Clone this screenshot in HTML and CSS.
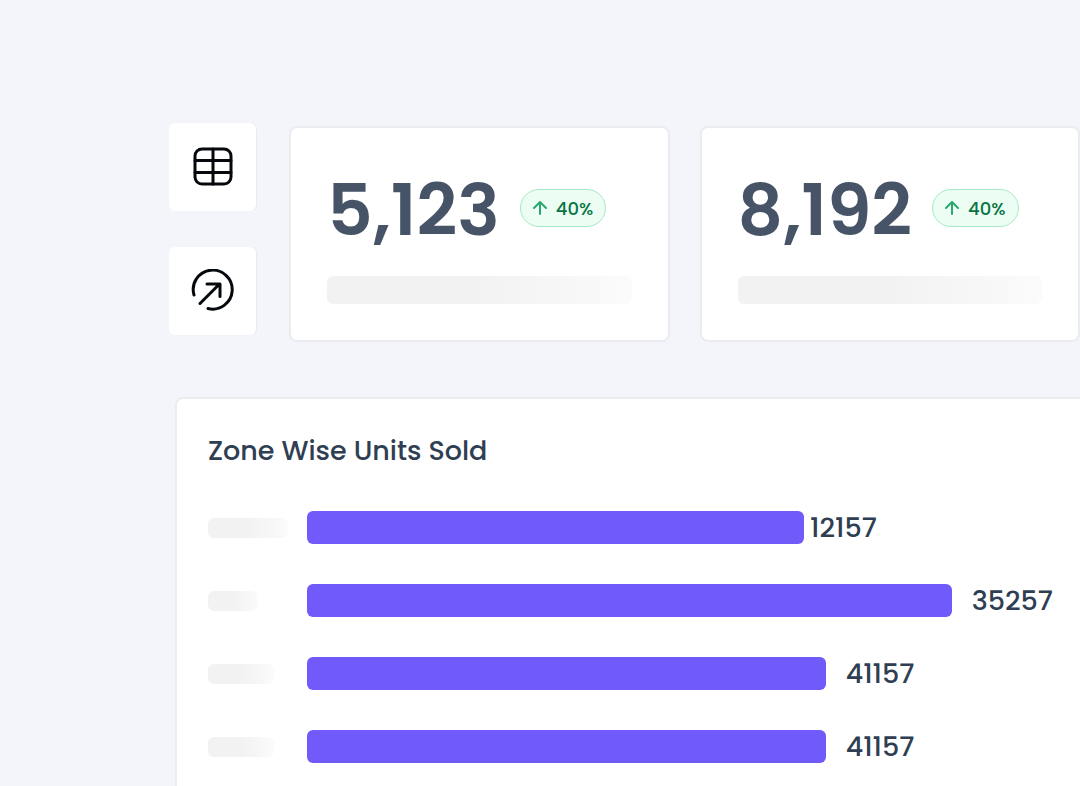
FILE: index.html
```
<!DOCTYPE html>
<html lang="en">
<head>
    <meta charset="UTF-8">
    <meta name="viewport" content="width=device-width, initial-scale=1.0">
    <title>Zone Wise Units Sold</title>
    <link rel="stylesheet" href="styles.css">
</head>
<body>
    <main>
        <div class="top">
            <nav class="tools">
                <button class="tool" type="button" aria-label="Table">
                    <svg width="44" height="44" viewBox="0 0 44 44">
                        <rect x="4" y="4" width="36" height="35" rx="7"/>
                        <path d="M22 4v35M4 15.500h36M4 27.500h36"/>
                    </svg>
                </button>
                <button class="tool" type="button" aria-label="Open">
                    <svg width="44" height="44" viewBox="0 0 44 44">
                        <path d="M3 26A19.5 19.5 0 1 1 17 39.500"/>
                        <path d="M9 34.500L28 15.500M16 15h13v12.500"/>
                    </svg>
                </button>
            </nav>
            <section class="cards">
                <div class="card">
                    <div class="stat">
                        <span class="number">5,123</span>
                        <span class="badge">
                            <svg width="14" height="14" viewBox="0 0 14 14"><path d="M7 13V1M1 7l6-6 6 6"/></svg>
                            40%
                        </span>
                    </div>
                    <div class="skeleton"></div>
                </div>
                <div class="card">
                    <div class="stat">
                        <span class="number">8,192</span>
                        <span class="badge">
                            <svg width="14" height="14" viewBox="0 0 14 14"><path d="M7 13V1M1 7l6-6 6 6"/></svg>
                            40%
                        </span>
                    </div>
                    <div class="skeleton"></div>
                </div>
            </section>
        </div>

        <section class="chart">
            <h2>Zone Wise Units Sold</h2>
            <ul class="rows">
                <li class="row tight">
                    <span class="label long"></span>
                    <div class="track"><span class="bar" style="width: 64.3%"></span><span>12157</span></div>
                </li>
                <li class="row">
                    <span class="label short"></span>
                    <div class="track"><span class="bar" style="width: 83.4%"></span><span>35257</span></div>
                </li>
                <li class="row">
                    <span class="label"></span>
                    <div class="track"><span class="bar" style="width: 67.1%"></span><span>41157</span></div>
                </li>
                <li class="row">
                    <span class="label"></span>
                    <div class="track"><span class="bar" style="width: 67.1%"></span><span>41157</span></div>
                </li>
            </ul>
        </section>
    </main>
</body>
</html>
```
FILE: styles.css
```
* {
    box-sizing: border-box;
}
body {
    margin: 0;
    background: #f4f5fa;
    color: #2f3e52;
    font-family: Poppins, Inter, sans-serif;
}
main {
    display: flex;
    flex-direction: column;
    min-height: 100vh;
    padding: 123px 0 0 169px;
}
.top {
    display: flex;
    gap: 33px;
}
.tools {
    display: flex;
    flex-direction: column;
    gap: 36px;
}
.tool {
    display: flex;
    align-items: center;
    justify-content: center;
    width: 87px;
    height: 88px;
    padding: 0;
    border: 0;
    border-radius: 6px;
    background: #fff;
    box-shadow: 1px 0 1px #e9eaef;
}
svg {
    fill: none;
    stroke: #05080d;
    stroke-width: 3;
    stroke-linecap: round;
    stroke-linejoin: round;
}
.cards {
    display: flex;
    flex: 1;
    gap: 30px;
    margin-top: 3px;
}
.card {
    flex: 1;
    height: 216px;
    padding: 40px 36px 0;
    border: 2px solid #ebecf0;
    border-radius: 8px;
    background: #fff;
}
.stat {
    display: flex;
    align-items: center;
    gap: 20px;
    height: 80px;
}
.number {
    padding-top: 4px;
    color: #475467;
    font-size: 71px;
    font-weight: 600;
    line-height: 80px;
}
.badge {
    display: flex;
    align-items: center;
    gap: 9px;
    height: 38px;
    padding: 0 12px;
    border: 1px solid #a6ebc3;
    border-radius: 19px;
    background: #ecfdf3;
    color: #087443;
    font-size: 18px;
    font-weight: 500;
}
.badge svg {
    stroke: #2ba66f;
    stroke-width: 2;
}
.skeleton,
.label {
    border-radius: 6px;
    background: linear-gradient(90deg, #f2f2f2 0%, #f2f2f2 50%, #fbfbfb 100%);
}
.skeleton {
    height: 28px;
    margin-top: 28px;
}
.chart {
    flex: 1;
    margin: 55px 0 0 6px;
    padding: 36px 0 0 31px;
    border: 2px solid #ebecf0;
    border-width: 2px 0 0 2px;
    border-radius: 8px 0 0 0;
    background: #fff;
}
h2 {
    margin: 0;
    font-size: 27px;
    font-weight: 500;
    line-height: 32px;
}
.rows {
    display: flex;
    flex-direction: column;
    gap: 40px;
    margin: 44px 0 0;
    padding: 0;
    list-style: none;
}
.row {
    display: grid;
    grid-template-columns: 99px 1fr;
    align-items: center;
    height: 33px;
}
.label {
    width: 66px;
    height: 20px;
}
.label.long {
    width: 80px;
}
.label.short {
    width: 50px;
}
.track {
    display: flex;
    align-items: center;
    gap: 20px;
    font-size: 27px;
    font-weight: 500;
    line-height: 32px;
}
.tight .track {
    gap: 6px;
}
.bar {
    flex-shrink: 0;
    height: 33px;
    border-radius: 6px;
    background: #705afa;
}
```
